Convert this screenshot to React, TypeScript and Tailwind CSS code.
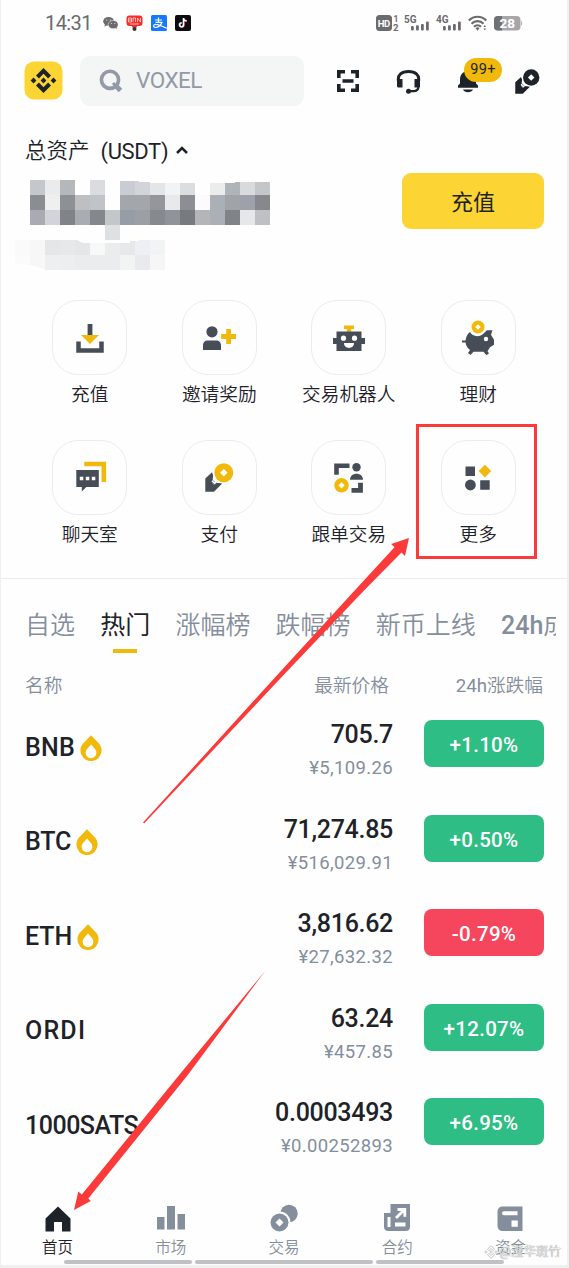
import type { ReactNode } from "react";

const DARK = "#474d57";
const INK = "#1e2329";
const GOLD = "#f0b90b";
const GREY = "#848e9c";

/* ---------- status bar ---------- */

function Signal({ label }: { label: string }) {
  return (
    <svg width="26" height="18" viewBox="0 0 26 18" fill="#6b6b6d">
      <text x="0" y="8.500" fontSize="10" fontWeight="700" fontFamily="Roboto, sans-serif">{label}</text>
      <rect x="7" y="12" width="2.800" height="4.500" rx="1" />
      <rect x="12" y="11.300" width="2.800" height="5.200" rx="1" />
      <rect x="17" y="10" width="2.800" height="6.500" rx="1" />
      <rect x="22" y="7.500" width="2.800" height="9" rx="1" />
    </svg>
  );
}

function StatusBar() {
  return (
    <div className="flex h-[46px] items-center pl-[44px] pr-[44px] text-[#6b6b6d]">
      <span className="w-[46px] text-[20px] leading-none tracking-[-0.6px]">14:31</span>
      <div className="ml-3 flex items-center gap-2">
        <svg width="15" height="14" viewBox="0 0 15 14">
          <path d="M1.900 8.500l-.4 2.200 2-1.200z" fill="#6b6b6d" />
          <ellipse cx="5.600" cy="5.300" rx="5.400" ry="4.400" fill="#6b6b6d" />
          <ellipse cx="10.200" cy="8.600" rx="5" ry="4.100" fill="#6b6b6d" stroke="#fefefe" strokeWidth=".5" />
          <path d="M12 11.500l1.800 1.700-.3-2.500z" fill="#6b6b6d" />
          <g fill="#fefefe"><circle cx="3.800" cy="4" r=".6" /><circle cx="7.400" cy="4" r=".6" /><circle cx="8.600" cy="7.500" r=".5" /><circle cx="11.800" cy="7.500" r=".5" /></g>
        </svg>
        <svg width="17" height="17" viewBox="0 0 17 17">
          <rect x=".5" y=".5" width="16" height="10.500" rx="3" fill="#ee2f2c" />
          <path d="M5 10h7l-2 3H7z" fill="#ee2f2c" />
          <path d="M2.500 3h3v4h-3V3m0 2h3M7 7V3h2.500v4M11.500 7V3l3 4V3M4 9h9" stroke="#ffd9d4" strokeWidth=".8" fill="none" />
          <circle cx="8.500" cy="14" r="2" fill="#3c3432" />
        </svg>
        <svg width="16" height="16" viewBox="0 0 16 16">
          <rect width="16" height="16" rx="1.500" fill="#1677ff" />
          <path d="M4 5h7M7.500 2.500v4.500M4.500 7.300h6.500C10 10.500 6.500 13 4 12.300c-2.500-.7-1.300-3.300 1-3 3 .3 6 2.200 11 4" stroke="white" strokeWidth="1.200" fill="none" />
        </svg>
        <svg width="16" height="16" viewBox="0 0 16 16">
          <rect width="16" height="16" rx="2" fill="#0b0b10" />
          <path d="M8.300 3v6.800a2 2 0 1 1-2-2" stroke="#38e0dc" strokeWidth="1.500" fill="none" />
          <path d="M9 3.200v6.800a2 2 0 1 1-2-2M9 3.500c.3 1.700 1.300 2.600 3 2.700" stroke="#f04a62" strokeWidth="1.500" fill="none" />
          <path d="M8.600 3v6.800a2 2 0 1 1-2-2M8.600 3.300c.3 1.700 1.300 2.500 3 2.600" stroke="white" strokeWidth="1.200" fill="none" />
        </svg>
      </div>
      <div className="ml-auto flex items-center">
        <svg width="23" height="18" viewBox="0 0 23 18" fontFamily="Roboto, sans-serif" fontWeight="700">
          <rect x="0" y="1" width="16" height="16" rx="3.500" fill="#6b6b6d" />
          <text x="1.800" y="12.700" fontSize="9.500" fill="white" textLength="12.500">HD</text>
          <text x="17.500" y="7.800" fontSize="8.500" fill="#6b6b6d">1</text>
          <text x="17" y="17" fontSize="9.500" fill="#6b6b6d">2</text>
        </svg>
        <span className="ml-[5px] flex gap-[6px]"><Signal label="5G" /><Signal label="4G" /></span>
        <svg className="ml-[6px]" width="20" height="17" viewBox="0 0 20 17" fill="none" stroke="#6b6b6d" strokeWidth="2.200">
          <path d="M.8 5.500c5-5 12.500-5 17.500 0M3.500 8.700c3.500-3.400 8.700-3.400 12 0M6 11.800c2-2 5-2 7 0" />
          <path d="M7.500 13.200a3 3 0 0 1 4 0l-2 2.500z" fill="#6b6b6d" stroke="none" />
          <path d="M15.500 12l1.300-2 1.300 2zM15.500 13.500l1.300 2 1.300-2z" fill="#6b6b6d" stroke="none" />
        </svg>
        <svg className="ml-[6px]" width="29" height="16" viewBox="0 0 29 16">
          <rect x="0" y="1" width="26.500" height="14.500" rx="4" fill="#a7a7aa" />
          <path d="M4 1h4v14.500H4a4 4 0 0 1-4-4V5a4 4 0 0 1 4-4z" fill="#717174" />
          <path d="M27.200 5.500c1.200.7 1.200 4.800 0 5.500z" fill="#a7a7aa" />
          <text x="5.500" y="13" fontSize="13.500" fontWeight="700" fontFamily="Roboto, sans-serif" fill="white">28</text>
        </svg>
      </div>
    </div>
  );
}

/* ---------- header ---------- */

function HandCoin({ hand, coin, className }: { hand: string; coin: string; className?: string }) {
  return (
    <svg className={className} width="29" height="29" viewBox="0 0 29 29">
      <path d="M.3 28.700V15.500L7 9.200l1.300 3.300-1.300 7.200 2.300 2.200 2.200-2.200c2 .5 4 .6 6.700-.1L9 28.700z" fill={hand} />
      <path d="M6.800 15.500v4l2.500 2.500 2.200-2.200c-2-.8-3.600-2.300-4.700-4.300z" fill={hand} />
      <path d="M7 17.800l2.500 2.500 1.700-1.200" stroke="white" strokeWidth="1.600" fill="none" />
      <circle cx="18.800" cy="9.800" r="11" fill="white" />
      <circle cx="18.800" cy="9.800" r="9.500" fill={coin} />
      <path d="M18.800 6l3.800 3.800-3.800 3.800L15 9.800z" fill="white" />
    </svg>
  );
}

function Header() {
  return (
    <header className="flex h-[70px] items-center pl-[23px] pr-[26px]">
      <svg width="39" height="39" viewBox="0 0 39 39" className="-mt-[1px] shrink-0">
        <rect x=".5" y=".5" width="38" height="38" rx="9.500" fill="#fcd535" />
        <g fill={INK}>
          <path d="M19.500 7l7.500 7.500-2.900 2.900-4.600-4.600-4.600 4.600-2.900-2.900z" />
          <path d="M19.500 32l7.500-7.500-2.900-2.900-4.600 4.600-4.600-4.600-2.900 2.900z" />
          <path d="M19.500 16.600l2.900 2.900-2.900 2.900-2.900-2.900zM9.500 16.600l2.900 2.900-2.900 2.900-2.900-2.900zM29.500 16.600l2.900 2.900-2.900 2.900-2.900-2.900z" />
        </g>
      </svg>
      <div className="-mt-[1px] ml-[17px] flex h-[50px] w-[224px] items-center rounded-[10px] bg-[#f4f5f5] pl-[19px]">
        <svg width="24" height="24" viewBox="0 0 24 24" fill="none" stroke="#929aa5" strokeWidth="3.600">
          <circle cx="11" cy="10.800" r="8.600" />
          <path d="M14 14l3 3" strokeWidth="3" />
          <path d="M16.500 16.500l5 5" strokeWidth="5" />
        </svg>
        <span className="ml-[13px] pt-px text-[22.5px] tracking-[-0.5px] text-[#929aa5]">VOXEL</span>
      </div>
      <svg className="ml-[33px] shrink-0" width="22" height="22" viewBox="0 0 22 22" fill="none" stroke={INK} strokeWidth="3.600">
        <path d="M1.800 8V1.800H8M14 1.800h6.200V8M20.200 14v6.200H14M8 20.200H1.800V14M5.500 11h11" />
      </svg>
      <svg className="ml-[37px] shrink-0" width="25" height="25" viewBox="0 0 25 25" fill="none" stroke={INK}>
        <path d="M2.500 12.500C1.200 5.500 6 2.500 12.500 2.500S23.800 5.500 22.500 12.500" strokeWidth="3" />
        <path d="M1 10h5.500v8.500H2.500c-1 0-1.500-.6-1.500-1.500zM18.500 10H24v7c0 1-.5 1.500-1.500 1.500h-4z" fill={INK} stroke="none" />
        <path d="M22.500 17c0 3.500-2 5.200-5 5.200H12" strokeWidth="2.200" />
        <circle cx="12.500" cy="22.300" r="2.500" fill={INK} stroke="none" />
      </svg>
      <div className="relative ml-[37px] h-[23px] w-[20px] shrink-0">
        <svg width="20" height="23" viewBox="0 0 20 23" fill={INK}>
          <path d="M2 10C2 4.500 5 1 10 1s8 3.500 8 9v3.500l2 2v2.200H0v-2.200l2-2zM5 19.500h10c-1.500 3.500-8.500 3.500-10 0z" />
        </svg>
        <span className="absolute -top-[12px] left-[6px] flex h-[24px] w-[38px] items-center justify-center rounded-full bg-[#f0b90b] text-[14.5px] tracking-[0.400px] text-[#1e2329]">99+</span>
      </div>
      <HandCoin hand={INK} coin={INK} className="ml-[37px] h-[25px] w-[25px] shrink-0" />
    </header>
  );
}

/* ---------- asset summary ---------- */

const MOSAIC: string[][] = [
  ["", "#c4c8cb", "#eaebed", "#b4b8bb", "", "#dadcdf", "", "#c9ccd2", "#d2d4d9", "#e3e5e7", "#f2f3f5", "#dbdddf", "", "#ebecec", "#afb4b8", "#d8dadc", "#c3c7ca"],
  ["", "#8a8d91", "#efefef", "#8d9095", "#bdbfc1", "#c1c4c7", "", "#a3a7ab", "#a3a7ab", "#93979c", "#e7e9ea", "#8b8f93", "#fbfbfb", "#abafb6", "#a0a4a9", "#9da1aa", "#85888d"],
  ["", "#a8abb1", "#d2d4d9", "#808388", "#a9adb3", "#84878c", "#c4c7c9", "#979da7", "#9ca0a6", "#86898e", "#90949a", "#777a7f", "#b3b6b9", "#abafb6", "#808388", "#e6e7ea", "#bec0c4"],
  ["", "", "", "", "", "", "#dfe0e2"],
  ["#fafafa", "#f7f7f7", "#e5e6e7", "#e7e8e9", "#e5e6e7", "#f7f8f8", "#ebecec", "#e7e8e9", "#eeeff2", "#f2f3f5"],
  ["#fbfbfb", "#f7f7f7", "#eeeff1", "#edeeef", "#ebecee", "#ebecee", "#ebecee", "#f2f4f4", "#e9eaed", "#f6f6f7"],
];

function HiddenBalance() {
  return (
    <svg width="255" height="90" viewBox="0 0 255 90" shapeRendering="crispEdges">
      {MOSAIC.map((row, y) =>
        row.map((fill, x) => fill && <rect key={`${x}-${y}`} x={x * 15} y={y * 15} width="15" height="15" fill={fill} />)
      )}
      <path d="M105 0h150v2h-35v1h-85v-1h-11v-1h-19zM62 60l6 3h47v-2l18-1zM0 83l15 2 15 4v1H0z" fill="#fefefe" />
    </svg>
  );
}

function Assets() {
  return (
    <section className="flex h-[162px] justify-between pl-[14px] pr-[23px]">
      <div className="flex flex-col">
        <div className="mt-[21px] flex h-[28px] items-center pl-[10px] text-[21.5px] font-[350] text-[#1e2329]">
          总资产
          <span className="ml-[11px] text-[22px] font-normal tracking-[-0.350px]">(USDT)</span>
          <svg className="-mt-[2px] ml-[8px]" width="12" height="8" viewBox="0 0 12 8" fill="none" stroke={INK} strokeWidth="2.500"><path d="M1 7l5-5 5 5" /></svg>
        </div>
        <div className="mt-[15px]"><HiddenBalance /></div>
      </div>
      <button className="mt-[57px] h-[56px] w-[142px] rounded-[9px] bg-[#fcd535] pt-[2px] text-[22px] text-[#1e2329]">充值</button>
    </section>
  );
}

/* ---------- shortcuts ---------- */

const Icon = ({ children }: { children: ReactNode }) => (
  <svg width="36" height="36" viewBox="0 0 36 36">{children}</svg>
);

const shortcuts: { label: string; icon: ReactNode }[] = [
  {
    label: "充值",
    icon: <Icon><path d="M15.600 4h4.800v11h-4.800z" fill={DARK} /><path d="M9 15h18l-9 9z" fill={GOLD} /><path d="M6.500 21.500v9h23v-9" stroke={DARK} strokeWidth="4.500" fill="none" /></Icon>,
  },
  {
    label: "邀请奖励",
    icon: <Icon><g transform="translate(-1 -1)"><circle cx="12" cy="12.800" r="5.600" fill={DARK} /><path d="M3 31v-4.500C3 23 5 21.500 8 21.500h8c3 0 5 1.500 5 5V31z" fill={DARK} /><path d="M28.600 10v15M21.200 17.500H36" stroke={GOLD} strokeWidth="4.800" /></g></Icon>,
  },
  {
    label: "交易机器人",
    icon: <Icon><path d="M13 5.500h10v3.500h-2.800V12h-4.400V9H13z" fill={GOLD} /><path d="M5.500 11.500h25V18H34v6h-3.500v7h-25v-7H2v-6h3.500z" fill={DARK} /><g fill="white"><circle cx="12.500" cy="18.200" r="2.600" /><circle cx="23.500" cy="18.200" r="2.600" /><path d="M13 23h10c0 6.500-10 6.500-10 0z" /></g></Icon>,
  },
  {
    label: "理财",
    icon: <Icon><path d="M2 20.500h3.500c.5-4 2-6.500 4.500-8.500 2 4 9 6.500 14 1l3-2.800H32.500l-1.500 4.500 3 5v5l-4 2.500-2.500 4 1.500 2-2.500 2-3-3.500h-10L10.500 35 8 33l2-3c-2.500-2-4-4.500-4.500-7.500H2z" fill={DARK} /><circle cx="26" cy="19" r="2.200" fill="white" /><circle cx="18" cy="7.400" r="8" fill="white" /><circle cx="18" cy="7" r="6.500" fill={GOLD} /><path d="M18 4.200l2.800 2.800-2.800 2.800L15.200 7z" fill="white" /></Icon>,
  },
  {
    label: "聊天室",
    icon: <Icon><g transform="translate(.3 -.5)"><path d="M12 4.500h19.500v18" stroke={GOLD} strokeWidth="4.600" fill="none" /><path d="M4 10.500h22.500v17H14L9.500 32v-4.500H4z" fill={DARK} /><path d="M7.500 17.200h3.500v3.500H7.500zM13.500 17.200H17v3.500h-3.500zM19.500 17.200H23v3.500h-3.500z" fill="white" /></g></Icon>,
  },
  { label: "支付", icon: <HandCoin hand={DARK} coin={GOLD} className="" /> },
  {
    label: "跟单交易",
    icon: <Icon><g transform="translate(0 -.7)"><path d="M5.500 15.500V6.500H18.500" stroke={DARK} strokeWidth="4.600" fill="none" /><circle cx="25.500" cy="8" r="4.200" fill={DARK} /><path d="M19 20.500c0-8 13-8 13 0z" fill={DARK} /><path d="M29.500 23.500v7.500h-9" stroke={DARK} strokeWidth="4.800" fill="none" /><circle cx="10.500" cy="26" r="7.200" fill={GOLD} /><path d="M10.500 22.900l3.100 3.100-3.100 3.100-3.100-3.100z" fill="white" /></g></Icon>,
  },
  {
    label: "更多",
    icon: <Icon><path d="M5.500 6.500H15V16H5.500zM20.200 20.300h9.500v9.500h-9.500z" fill={DARK} /><path d="M24.900 4.800l6.300 6.300-6.300 6.300-6.300-6.300z" fill={GOLD} /><circle cx="10.400" cy="25" r="5.400" fill={DARK} /></Icon>,
  },
];

function Shortcuts() {
  return (
    <section className="grid h-[301px] grid-cols-4 content-start gap-y-[30px] border-b border-[#eaecef] px-[24px] pt-[22px]">
      {shortcuts.map(({ label, icon }) => (
        <div key={label} className="flex h-[110px] flex-col items-center">
          <div className="flex h-[75px] w-[75px] shrink-0 items-center justify-center rounded-[26px] border-[1.5px] border-[#ececee]">{icon}</div>
          <span className="mt-[7px] whitespace-nowrap text-[18.7px] leading-[26px] font-[350] text-[#1e2329]">{label}</span>
        </div>
      ))}
    </section>
  );
}

/* ---------- market list ---------- */

const tabs = ["自选", "热门", "涨幅榜", "跌幅榜", "新币上线"];

const rows = [
  { name: "BNB", hot: true, price: "705.7", fiat: "¥5,109.26", change: "+1.10%", spacing: "tracking-[0.2px]" },
  { name: "BTC", hot: true, price: "71,274.85", fiat: "¥516,029.91", change: "+0.50%", spacing: "tracking-[-0.2px]" },
  { name: "ETH", hot: true, price: "3,816.62", fiat: "¥27,632.32", change: "-0.79%", spacing: "tracking-[-0.1px]" },
  { name: "ORDI", hot: false, price: "63.24", fiat: "¥457.85", change: "+12.07%", spacing: "tracking-[1.2px]" },
  { name: "1000SATS", hot: false, price: "0.0003493", fiat: "¥0.00252893", change: "+6.95%", spacing: "tracking-[-0.5px]" },
];

function Flame() {
  return (
    <svg width="22" height="26" viewBox="0 0 22 26">
      <path d="M11 .3l7.200 7.400A10.600 10.600 0 1 1 3.800 7.700z" fill={GOLD} />
      <path d="M11 9.500l3.700 4.300a5.400 5.400 0 1 1-7.400 0z" fill="white" />
    </svg>
  );
}

function Market() {
  return (
    <section className="flex h-[593px] flex-col">
      <nav className="mr-[11px] flex h-[74px] shrink-0 items-start gap-[25.200px] overflow-hidden pl-[24px] pt-[29px] text-[25px] leading-[36px] whitespace-nowrap text-[#848e9c]">
        {tabs.map((tab) => (
          <span key={tab} className={tab === "热门" ? "flex flex-col items-center text-[#1e2329]" : "font-[350]"}>
            {tab}
            {tab === "热门" && <span className="mt-[5px] h-[4px] w-[24px] shrink-0 bg-[#f0b90b]" />}
          </span>
        ))}
        <span className="font-[350]"><span className="font-medium">24h</span>成交额</span>
      </nav>
      <div className="flex h-[54px] shrink-0 items-center px-[24px] pt-[12px] text-[18.7px] font-[350] text-[#848e9c]">
        <span className="flex-1">名称</span>
        <span>最新价格</span>
        <span className="w-[154px] text-right"><span className="font-normal">24h</span>涨跌幅</span>
      </div>
      {rows.map((r) => (
        <div key={r.name} className="flex h-[94.5px] shrink-0 items-start pl-[24px] pr-[23px] pt-[13px]">
          <div className={`flex h-[55px] flex-1 items-center gap-[5px] text-[25px] font-medium text-[#1e2329] ${r.spacing}`}>
            {r.name}
            {r.hot && <Flame />}
          </div>
          <div className="flex flex-col items-end">
            <span className="text-[25px] leading-[30px] font-medium tracking-[-0.300px] text-[#1e2329]">{r.price}</span>
            <span className="mt-[6px] text-[18.5px] leading-[24px] tracking-[0.350px] text-[#848e9c]">{r.fiat}</span>
          </div>
          <div className={`ml-[31px] flex h-[47px] w-[120px] items-center justify-center rounded-[8px] pt-[4px] text-[20.5px] font-medium tracking-[0.300px] text-white ${r.change.startsWith("-") ? "bg-[#f6465d]" : "bg-[#2ebd85]"}`}>
            {r.change}
          </div>
        </div>
      ))}
    </section>
  );
}

/* ---------- bottom navigation ---------- */

const Nav = ({ children }: { children: ReactNode }) => (
  <svg width="30" height="30" viewBox="0 0 30 30">{children}</svg>
);

const navItems: { label: string; icon: ReactNode }[] = [
  { label: "首页", icon: <Nav><path d="M15 2.500l12.500 12V27.500H19V18h-8v9.500H2.500v-13z" fill={INK} /></Nav> },
  { label: "市场", icon: <Nav><path d="M1 13h7.500v12.500H1zM11 2h8v23.500h-8zM21.500 10H29v15.500h-7.500z" fill={GREY} /></Nav> },
  {
    label: "交易",
    icon: <Nav><circle cx="20" cy="9.500" r="8.700" fill={GREY} /><circle cx="10.500" cy="18.500" r="11" fill="#fefefe" /><circle cx="10.500" cy="18.500" r="9" fill={GREY} /><path d="M10.500 14.500l4 4-4 4-4-4z" fill="white" /></Nav>,
  },
  {
    label: "合约",
    icon: <Nav><path d="M2 9h6.500V0H28v22.500c0 3-1.500 4.500-4.500 4.500h-17C3.500 27 2 25.500 2 22.500z" fill={GREY} /><path d="M5.500 13h3v10h-3zM13 18.500h10.500v4H13z" fill="white" /><path d="M14 14l8-8M15.500 5.500h7.300v7.300" stroke="white" strokeWidth="2.800" fill="none" /></Nav>,
  },
  {
    label: "资金",
    icon: <Nav><path d="M8 2.500h19.500V27H8c-3.500 0-5.500-2-5.500-5.500V8c0-3.500 2-5.500 5.500-5.500z" fill={GREY} /><path d="M9 7.200h13.500v4H9a2 2 0 0 1 0-4zM16.500 16.500h6.300v6.300h-6.300z" fill="white" /></Nav>,
  },
];

function BottomNav() {
  return (
    <footer className="relative flex h-[93px] flex-col">
      <div className="grid h-[88px] grid-cols-5 pt-[32px]">
        {navItems.map(({ label, icon }, i) => (
          <div key={label} className="flex flex-col items-center">
            {icon}
            <span className={`mt-[3px] text-[15.5px] leading-[22px] font-[350] ${i === 0 ? "text-[#1e2329]" : "text-[#848e9c]"}`}>{label}</span>
          </div>
        ))}
      </div>
      <div className="flex gap-[3px] pl-[63px]">
        <div className="h-[4px] w-[128px] rounded-full bg-[#c0c1c4]" />
        <div className="h-[4px] w-[178px] rounded-full bg-[#c0c1c4]" />
        <div className="h-[4px] w-[128px] rounded-full bg-[#c0c1c4]" />
      </div>
      <div className="absolute right-[6px] bottom-[3px] flex items-center gap-[2px] text-[12.5px] leading-[20px] font-light text-white [text-shadow:0_0_1px_#666,0_0_1px_#888]">
        <svg width="14" height="14" viewBox="0 0 14 14" fill="white" stroke="#b5b5b8" strokeWidth=".8">
          <path d="M7 .8l3.500 3.500-1.300 1.300L7 3.500 4.800 5.600 3.500 4.300zM7 13.200l3.500-3.500-1.300-1.300L7 10.500 4.800 8.400 3.500 9.700zM7 5.700L8.300 7 7 8.300 5.700 7zM2 5.700L3.300 7 2 8.300.7 7zM12 5.700L13.300 7 12 8.300 10.700 7z" />
        </svg>
        @滢华斑竹
      </div>
    </footer>
  );
}

/* ---------- hand-drawn annotations ---------- */

function Annotations() {
  return (
    <svg className="pointer-events-none absolute top-0 left-0" width="569" height="1268" viewBox="0 0 569 1268">
      <rect x="417.500" y="425.500" width="118" height="132" fill="none" stroke="#fc3a3a" strokeWidth="3" />
      <path d="M409 538l-17.800 6 3.300 3.200L356.500 588.500 285 666.500 143 822.500l1.300.8L285 673.500l79.500-83.500L401.500 552.500l3.500 3.500z" fill="#fc3a3a" />
      <path d="M74 1210l4.300-18.500 3.500 3L180 1074l85.500-103.500L187 1076l-98.700 122.500 2.500 2.500z" fill="#fc3a3a" />
    </svg>
  );
}

export default function App() {
  return (
    <div className="relative h-[1268px] w-[569px] overflow-hidden bg-[#f0f0f0] pl-px pr-[2px] font-['Roboto','Noto_Sans_CJK_SC',sans-serif]">
      <main className="h-[1265px] bg-[#fefefe]">
        <StatusBar />
        <Header />
        <Assets />
        <Shortcuts />
        <Market />
        <BottomNav />
      </main>
      <Annotations />
    </div>
  );
}
